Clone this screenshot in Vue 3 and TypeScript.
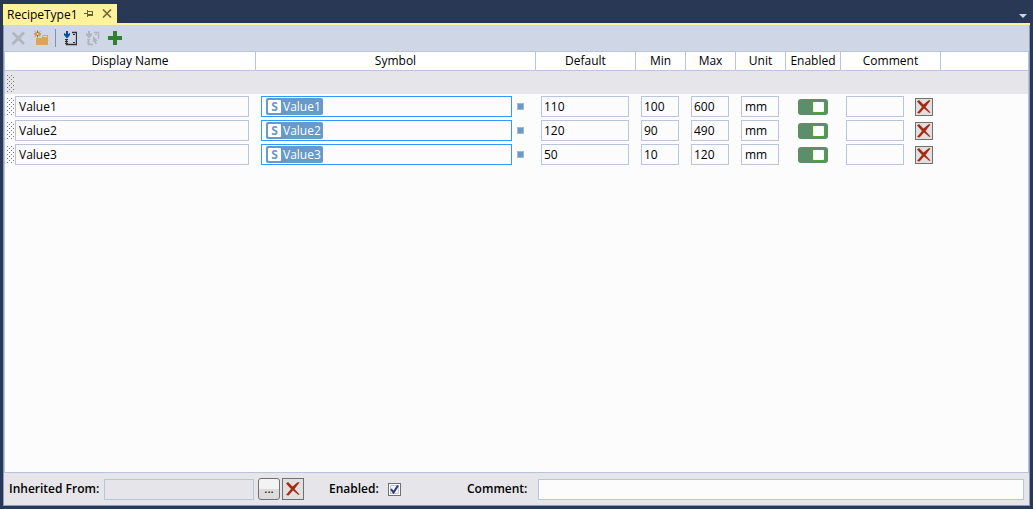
<script setup lang="ts">
import { ref } from 'vue'

interface RecipeRow {
  name: string
  symbol: string
  def: string
  min: string
  max: string
  unit: string
  enabled: boolean
  comment: string
}

const columns = ['Display Name', 'Symbol', 'Default', 'Min', 'Max', 'Unit', 'Enabled', 'Comment', '']

const rows = ref<RecipeRow[]>([
  { name: 'Value1', symbol: 'Value1', def: '110', min: '100', max: '600', unit: 'mm', enabled: true, comment: '' },
  { name: 'Value2', symbol: 'Value2', def: '120', min: '90', max: '490', unit: 'mm', enabled: true, comment: '' },
  { name: 'Value3', symbol: 'Value3', def: '50', min: '10', max: '120', unit: 'mm', enabled: true, comment: '' },
])

const inherited = ref('')
const enabled = ref(true)
const comment = ref('')
</script>

<template>
  <div class="window">
    <header class="tabs">
      <div class="tab">
        <span class="tab-title">RecipeType1</span>
        <button class="tab-btn" type="button" aria-label="Pin tab">
          <svg width="9" height="7" viewBox="0 0 9 7" shape-rendering="crispEdges" fill="#6b5f35">
            <path d="M0 3h3v1H0zM3 0h1v7H3zM4 1h5v1H4zM8 1h1v5H8zM4 4h5v2H4z" />
          </svg>
        </button>
        <button class="tab-btn close" type="button" aria-label="Close tab">
          <svg width="10" height="9" viewBox="0 0 10 9">
            <path d="M1 .5l8 8M9 .5l-8 8" stroke="#75683a" stroke-width="1.6" />
          </svg>
        </button>
      </div>
      <button class="menu" type="button" aria-label="Open documents">
        <svg width="8" height="4" viewBox="0 0 8 4"><path d="M0 0h8L4 4z" fill="#ced4df" /></svg>
      </button>
    </header>

    <main class="pane">
      <div class="toolbar">
        <button type="button" aria-label="Delete">
          <svg width="16" height="16" viewBox="0 0 16 16">
            <path d="M2.500 2.500L14 14M14 2.500L2.500 14" stroke="#b1b5be" stroke-width="2.600" />
          </svg>
        </button>
        <button type="button" aria-label="New group">
          <svg width="16" height="16" viewBox="0 0 16 16">
            <path d="M3 8h6V6l1-1h5v10H3z" fill="#d9a55c" />
            <path d="M10 6.500h4" stroke="#f1d9b3" />
            <path d="M4.500.5v7M1 4h7M2 1.500l5 5M7 1.500l-5 5" stroke="#b06a10" />
            <circle cx="4.500" cy="4" r="1" fill="#f6e3c4" />
          </svg>
        </button>
        <span class="sep"></span>
        <button type="button" aria-label="Import values">
          <svg width="16" height="16" viewBox="0 0 16 16">
            <path d="M11 2.500h4.500v12h-10V9" fill="none" stroke="#333" stroke-width="1.300" />
            <path d="M4 9.500h3M4 11.500h3M4 13.500h3M12 4.500h2M12 12.500h2" stroke="#333" />
            <path d="M5 1h2v3l2-1v2L6 8.500 3 5V3l2 1z" fill="#00539c" />
          </svg>
        </button>
        <button type="button" aria-label="Import selected values">
          <svg width="16" height="16" viewBox="0 0 16 16">
            <path d="M10 2.500h4.500V9M4.500 9v5.500H9" fill="none" stroke="#aeb3bd" stroke-width="1.300" />
            <path d="M3 9.500h3M3 11.500h3M3 13.500h3M11 4.500h2" stroke="#aeb3bd" />
            <path d="M4 1h2v3l2-1v2L5 8.500 2 5V3l2 1z" fill="#aeb3bd" />
            <path d="M9 6l5 5h-2l1 3h-2l-1-3-1 1.500z" fill="#aeb3bd" />
          </svg>
        </button>
        <button type="button" aria-label="Add value">
          <svg width="16" height="16" viewBox="0 0 16 16">
            <path d="M6 1h4v5h5v4h-5v5H6v-5H1V6h5z" fill="#2f8130" />
          </svg>
        </button>
      </div>

      <div class="grid">
        <table>
          <colgroup>
            <col class="c-name" /><col class="c-symbol" /><col class="c-wide" /><col class="c-num" />
            <col class="c-num" /><col class="c-num" /><col class="c-enabled" /><col class="c-wide" /><col />
          </colgroup>
          <thead>
            <tr>
              <th v-for="c in columns" :key="c" scope="col">{{ c }}</th>
            </tr>
          </thead>
          <tbody>
            <tr class="blank">
              <td colspan="9"><div class="cell first"><span class="grip"></span></div></td>
            </tr>
            <tr v-for="row in rows" :key="row.symbol">
              <td>
                <div class="cell first">
                  <span class="grip"></span>
                  <input v-model="row.name" class="field grow" type="text" aria-label="Display Name" />
                </div>
              </td>
              <td>
                <div class="cell symbol">
                  <div class="field picker grow">
                    <span class="chip"><b>S</b>{{ row.symbol }}</span>
                  </div>
                  <button class="dot" type="button" aria-label="Symbol options"></button>
                </div>
              </td>
              <td><div class="cell"><input v-model="row.def" class="field num grow" type="text" aria-label="Default" /></div></td>
              <td><div class="cell"><input v-model="row.min" class="field num grow" type="text" aria-label="Min" /></div></td>
              <td><div class="cell"><input v-model="row.max" class="field num grow" type="text" aria-label="Max" /></div></td>
              <td><div class="cell"><input v-model="row.unit" class="field grow" type="text" aria-label="Unit" /></div></td>
              <td>
                <div class="cell center">
                  <input v-model="row.enabled" class="switch" type="checkbox" role="switch" aria-label="Enabled" />
                </div>
              </td>
              <td>
                <div class="cell comment">
                  <input v-model="row.comment" class="field grow" type="text" aria-label="Comment" />
                  <button class="del" type="button" aria-label="Delete row">
                    <svg width="14" height="14" viewBox="0 0 14 14">
                      <path d="M0 1.500L2 0l4.500 4.500L12 0l1.500.5L8.500 7l5 5.500-1 .5L7 8.500 2.500 13.500 0 13l5-6z" fill="#a82a12" />
                    </svg>
                  </button>
                </div>
              </td>
              <td></td>
            </tr>
          </tbody>
        </table>
      </div>

      <footer class="bottom">
        <label class="l-inherit" for="inherited">Inherited From:</label>
        <input id="inherited" v-model="inherited" class="field inherited" type="text" readonly />
        <button class="browse" type="button" aria-label="Browse">...</button>
        <button class="del large" type="button" aria-label="Clear inherited type">
          <svg width="14" height="14" viewBox="0 0 14 14">
            <path d="M0 1.500L2 0l4.500 4.500L12 0l1.500.5L8.500 7l5 5.500-1 .5L7 8.500 2.500 13.500 0 13l5-6z" fill="#a82a12" />
          </svg>
        </button>
        <label class="l-enabled" for="enabled">Enabled:</label>
        <span class="check">
          <input id="enabled" v-model="enabled" type="checkbox" />
          <svg v-if="enabled" width="9" height="9" viewBox="0 0 9 9">
            <path d="M1 4l2.500 3.500L8 .5" fill="none" stroke="#2b3584" stroke-width="2" />
          </svg>
        </span>
        <label class="l-comment" for="comment">Comment:</label>
        <input id="comment" v-model="comment" class="field grow" type="text" />
      </footer>
    </main>
  </div>
</template>

<style>
body {
  margin: 0;
  background: #293955;
}
</style>

<style scoped>
.window {
  box-sizing: border-box;
  height: 100vh;
  padding: 4px 3px 3px;
  display: flex;
  flex-direction: column;
  background: #293955;
  color: #000;
  font: 12px/16px "Open Sans", "Noto Sans", sans-serif;
}
button,
input {
  font: inherit;
  color: inherit;
  margin: 0;
  padding: 0;
  box-sizing: border-box;
}
button {
  border: 0;
  background: none;
  display: flex;
  align-items: center;
  justify-content: center;
}
svg {
  display: block;
}
.tabs {
  display: flex;
  justify-content: space-between;
  height: 19px;
  border-bottom: 2px solid #fff29d;
}
.tab {
  display: flex;
  align-items: center;
  width: 114px;
  box-sizing: border-box;
  padding: 0 4px;
  background: #fff29d;
}
.tab-title {
  flex: 1;
  white-space: nowrap;
  padding-top: 2px;
}
.tab-btn {
  width: 12px;
  height: 16px;
}
.tab-btn.close {
  margin-left: 7px;
}
.menu {
  width: 14px;
  padding-top: 4px;
}
.pane {
  flex: 1;
  min-height: 0;
  display: flex;
  flex-direction: column;
  border: solid #8e9bbc;
  border-width: 0 1px 1px;
  background: #e6e6ea;
}
.toolbar {
  display: flex;
  align-items: center;
  height: 26px;
  padding-left: 6px;
  gap: 7px;
  background: #cfd6e5;
}
.toolbar button {
  width: 16px;
  height: 16px;
}
.toolbar .sep {
  width: 1px;
  height: 18px;
  margin: 0 -2px 0 -1px;
  background: #8591a8;
}
.grid {
  flex: 1;
  min-height: 0;
  border: 1px solid #bac4dc;
  background: #fcfcfc;
}
table {
  width: 100%;
  table-layout: fixed;
  border-collapse: separate;
  border-spacing: 0;
}
.c-name {
  width: 251px;
}
.c-symbol {
  width: 280px;
}
.c-wide {
  width: 100px;
}
.c-num {
  width: 50px;
}
.c-enabled {
  width: 55px;
}
th {
  height: 18px;
  padding: 0;
  background: #fff;
  border: solid #bac4dc;
  border-width: 0 1px 1px 0;
  font-weight: 400;
  line-height: 18px;
}
th:last-child {
  border-right: 0;
}
td {
  padding: 0;
}
.cell {
  display: flex;
  align-items: center;
  box-sizing: border-box;
  height: 24px;
  padding: 2px 7px 1px 5px;
}
.cell.first {
  padding-left: 2px;
  gap: 1px;
}
.cell.symbol {
  padding-right: 12px;
  gap: 5px;
}
.cell.comment {
  padding-right: 8px;
  gap: 11px;
}
.cell.center {
  justify-content: center;
  padding: 2px 1px 1px 0;
}
.blank .cell {
  height: 23px;
  background: #e6e6ea;
}
.grip {
  flex: none;
  width: 7px;
  height: 17px;
  background: url("data:image/svg+xml,%3Csvg xmlns='http://www.w3.org/2000/svg' width='4' height='4'%3E%3Cpath d='M0 0h1v1H0zM2 2h1v1H2z' fill='%2374747f'/%3E%3C/svg%3E");
}
.field {
  height: 21px;
  padding: 0 3px 1px;
  border: 1px solid #bac4dc;
  border-radius: 0;
  background: #fcfcfc;
  box-sizing: border-box;
}
.num {
  padding: 0 2px 1px;
}
.grow {
  flex: 1;
  width: 100%;
  min-width: 0;
}
.picker {
  display: flex;
  align-items: center;
  padding: 0 4px;
  border-color: #3399ff;
}
.chip {
  display: flex;
  align-items: center;
  gap: 2px;
  height: 17px;
  padding: 0 2px;
  border-radius: 2px;
  background: #6699cc;
  color: #fff;
}
.chip b {
  width: 13px;
  height: 13px;
  border-radius: 1px;
  background: #fff;
  color: #6699cc;
  line-height: 13px;
  text-align: center;
}
.dot {
  flex: none;
  width: 7px;
  height: 7px;
  border: 1px solid #a5b8d8;
  background: #6699cc;
}
.switch {
  appearance: none;
  width: 30px;
  height: 16px;
  border-radius: 3px;
  background: #5b8f6a;
  display: flex;
  align-items: center;
  padding: 0 3px;
}
.switch::before {
  content: "";
  width: 13px;
  height: 12px;
  box-sizing: border-box;
  border: 1px solid #45ab22;
  border-radius: 2px;
  background: #fff;
}
.switch:checked {
  justify-content: flex-end;
}
.del {
  flex: none;
  width: 18px;
  height: 18px;
  border: 1px solid #707070;
  background: #e0e0e0;
}
.del.large {
  width: 22px;
  height: 22px;
}
.bottom {
  display: flex;
  align-items: center;
  height: 32px;
  padding: 0 5px;
}
.bottom label {
  font-weight: 600;
  white-space: nowrap;
}
.l-inherit {
  width: 95px;
}
.inherited {
  width: 150px;
  background: #e6e6ea;
}
.browse {
  width: 22px;
  height: 22px;
  margin: 0 2px 0 4px;
  border: 1px solid #707070;
  border-radius: 3px;
  background: linear-gradient(#f3f3f3 50%, #dcdcdc 50%);
}
.l-enabled {
  width: 59px;
  margin-left: 25px;
}
.check {
  display: grid;
  place-items: center;
}
.check input {
  grid-area: 1 / 1;
  appearance: none;
  width: 13px;
  height: 13px;
  border: 1px solid #707070;
  background: #f4f4f4;
  box-shadow: inset 0 0 0 1px #fff, inset 0 0 0 2px #c5cad2;
}
.check svg {
  grid-area: 1 / 1;
  pointer-events: none;
}
.l-comment {
  width: 71px;
  margin-left: 66px;
}
</style>
